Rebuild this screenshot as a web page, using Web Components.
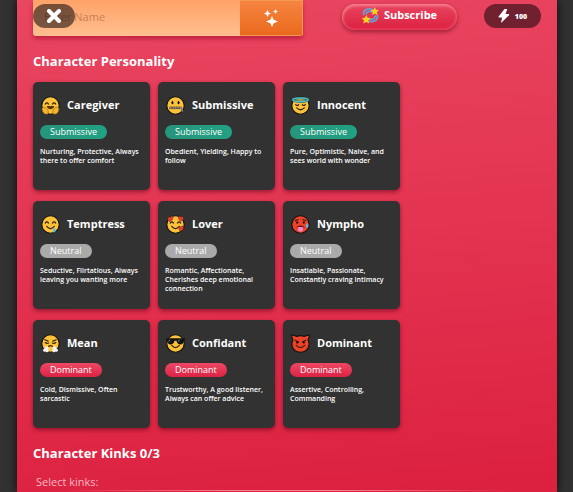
<!DOCTYPE html>
<html lang="en">
<head>
<meta charset="utf-8">
<meta name="viewport" content="width=device-width, initial-scale=1">
<title>Create Character</title>
<style>
    html{
        background-color: #323232;
    }
    body{
        margin: 0;
        min-height: 100vh;
        font-family: "Open Sans", "Noto Sans", sans-serif;
        color: white;
    }
</style>
</head>
<body>
<character-page>
    <name-field slot="name"></name-field>
    <top-bar slot="bar" credits="100"></top-bar>
    <page-section heading="Character Personality">
        <personality-grid></personality-grid>
    </page-section>
    <page-section heading="Character Kinks 0/3">
        <kink-list label="Select kinks:"></kink-list>
    </page-section>
</character-page>

<script>
// Small helper so each element only has to bring its markup
function attach(el, html){
    const template = document.createElement("template");
    template.innerHTML = html;
    el.attachShadow({mode:"open"});
    el.shadowRoot.appendChild(template.content.cloneNode(true));
}

class CharacterPage extends HTMLElement{
    constructor(){
        super();
        attach(this, `
            <style>
                :host{
                    display: block;
                    position: relative;
                    box-sizing: border-box;
                    min-height: 100vh;
                    margin: 0 16px 0 17px;
                    padding: 0 16px;
                    background: linear-gradient(175deg, #e94661, #dc203f);
                    box-shadow: 0 0 10px rgba(0, 0, 0, .8);
                }
            </style>
            <slot name="bar"></slot>
            <main>
                <slot name="name"></slot>
                <slot></slot>
            </main>
        `);
    }
}

class TopBar extends HTMLElement{
    constructor(){
        super();
        attach(this, `
            <style>
                :host{
                    position: absolute;
                    top: 4px;
                    left: 16px;
                    right: 16px;
                    z-index: 2;
                    display: flex;
                    align-items: flex-start;
                    gap: 27px;
                }
                button{
                    border: 0;
                    margin: 0;
                    font: inherit;
                    color: white;
                    cursor: pointer;
                }
                .close{
                    width: 42px;
                    height: 24px;
                    padding: 0;
                    margin-right: auto;
                    border-radius: 12px;
                    background-color: rgba(30, 20, 20, .6);
                }
                .close svg{
                    display: block;
                    margin: auto;
                }
                .subscribe{
                    display: flex;
                    justify-content: center;
                    gap: 5px;
                    width: 115px;
                    height: 26px;
                    padding: 3px 0;
                    border-radius: 13px;
                    font-size: 11px;
                    font-weight: 700;
                    line-height: 16px;
                    background: linear-gradient(#e94560, #dc2040);
                    box-shadow: 0 2px 4px rgba(110, 10, 30, .6), inset 1px 2px 3px rgba(255, 170, 175, .6), inset -1px -1px 3px rgba(255, 110, 130, .5);
                }
                .credits{
                    display: flex;
                    align-items: center;
                    justify-content: center;
                    gap: 5px;
                    width: 57px;
                    height: 24px;
                    border-radius: 12px;
                    font-size: 7px;
                    font-weight: 800;
                    background-color: #70202f;
                }
            </style>
            <button class="close" type="button" aria-label="Close">
                <svg width="16" height="16" viewBox="0 0 16 16"><path d="M3 3l10 10M13 3L3 13" stroke="#fff" stroke-width="4" stroke-linecap="round"/></svg>
            </button>
            <button class="subscribe" type="button">
                <svg width="17" height="17" viewBox="0 0 16 16">
                    <g fill="none" stroke="#65a5d9" stroke-width="1.6" stroke-linecap="round">
                        <path d="M1.500 7C1 3 5 1 9.500 2.200M4 6.500C4.500 4 7 3.500 9 4.500"/>
                        <path d="M14.500 8C15 12 12 14.500 7.500 13.500M12.500 8.500C12 11.500 9.500 12 7.500 11.500"/>
                    </g>
                    <path fill="#ffd21f" d="M12 0l1.200 2.600 2.800.2-2 2 .6 2.900L12 6.200 9.500 7.700 10 4.800 8 2.800l2.800-.2zM4 7.500l1.300 2.600 3 .3-2.100 2.100.5 3L4 14.100 1.300 15.500l.5-3L-.2 10.400l2.900-.3z"/>
                </svg>
                <span>Subscribe</span>
            </button>
            <div class="credits">
                <svg width="12" height="14" viewBox="0 0 12 14"><path d="M6.500 0L.6 7.600c-.3.500 0 1 .5 1h3L3 14 11 6.200c.5-.5.200-1.200-.4-1.200H7.500L9.300 0z" fill="#fff"/></svg>
                <span id="amount"></span>
            </div>
        `);
    }

    connectedCallback(){
        this.shadowRoot.getElementById("amount").textContent = this.getAttribute("credits");
    }
}

class NameField extends HTMLElement{
    constructor(){
        super();
        attach(this, `
            <style>
                :host{
                    display: flex;
                    width: 270px;
                    max-width: 100%;
                    height: 36px;
                    border-radius: 0 0 3px 3px;
                    overflow: hidden;
                    box-shadow: 0 3px 4px rgba(165, 15, 45, .6);
                }
                input{
                    flex: 1;
                    min-width: 0;
                    box-sizing: border-box;
                    border: 0;
                    padding: 0 11px 4px;
                    font: inherit;
                    font-size: 11px;
                    background: linear-gradient(#ffa268, #ffbf8f);
                }
                input::placeholder{
                    color: #cc7f58;
                    opacity: 1;
                }
                button{
                    width: 63px;
                    padding: 0;
                    border: 1px solid #f39a50;
                    border-left: 0;
                    background: linear-gradient(#f68440, #ea6a1c);
                    cursor: pointer;
                }
                svg{
                    display: block;
                    margin: auto;
                }
            </style>
            <input type="text" placeholder="Enter Name" aria-label="Enter Name">
            <button type="button" aria-label="Random name">
                <svg width="18" height="18" viewBox="0 0 18 18" fill="#fff">
                    <path d="M10 7l1.700 3.800L16 12.500l-4.300 1.700L10 18l-1.700-3.800L4 12.500l4.300-1.700zM5.500 1l1.200 2.400L9 4.500 6.700 5.600 5.500 8 4.300 5.600 2 4.500l2.300-1.100zM13.500 0l.8 1.700 1.700.8-1.700.8-.8 1.700-.8-1.700-1.700-.8 1.700-.8z"/>
                </svg>
            </button>
        `);
    }
}

class PageSection extends HTMLElement{
    constructor(){
        super();
        attach(this, `
            <style>
                :host{
                    display: block;
                    padding-top: 15px;
                }
                h2{
                    margin: 0 0 11px;
                    font-size: 13px;
                    font-weight: 700;
                    line-height: 20px;
                }
            </style>
            <h2></h2>
            <slot></slot>
        `);
    }

    connectedCallback(){
        this.shadowRoot.querySelector("h2").textContent = this.getAttribute("heading");
    }
}

const round = `<circle cx="10" cy="10" r="9.200"/>`;
const smile = `<path class="line" d="M6 12q4 4.500 8 0"/>`;
const happyEyes = `<path class="line" d="M4.500 8.500q1.700-2.500 3.400 0M12.100 8.500q1.700-2.500 3.400 0"/>`;

// Drawn on a 20x20 box, the face outline comes from the shared styles
const faces = {
    hug: `<g class="face">${round}</g>${happyEyes}<path d="M6 10.500h8q-1 3.500-4 3.500t-4-3.500z" fill="#5d3512"/>
        <path d="M1 13l3-1.500 3.500 3.500v4H4q-3-2-3-6zM19 13l-3-1.500-3.500 3.500v4H16q3-2 3-6z" fill="#f5b52e" stroke="#8a5a12" stroke-width=".6"/>`,
    zipper: `<g class="face">${round}</g><ellipse cx="6.800" cy="7" rx="1" ry="1.700"/><ellipse cx="13.200" cy="7" rx="1" ry="1.700"/>
        <path d="M3.500 12.500h13" stroke="#5a4a30" stroke-width="2.600"/><path d="M4 12.500h12" stroke="#b9b3a2" stroke-width="1.200" stroke-dasharray="1 .8"/><path d="M16 12.500l1.500 4" stroke="#777" stroke-width="1.600"/>`,
    halo: `<g class="face">${round}</g><path class="line" d="M5 9q1.500 2 3 0M12 9q1.500 2 3 0M6 12.500q4 4 8 0"/>
        <ellipse cx="10" cy="4" rx="8" ry="2" fill="none" stroke="#1f5961" stroke-width="2.600"/><ellipse cx="10" cy="4" rx="8" ry="2" fill="none" stroke="#55bdc4" stroke-width="1.600"/>`,
    drool: `<g class="face">${round}</g>${happyEyes}${smile}<path d="M13.500 12.500q2.500 3.500 1.500 5.500-1.500 1-2.500-.5z" fill="#52b9e8"/>`,
    love: `<g class="face">${round}</g>${happyEyes}${smile}
        <g fill="#e8402e" stroke="#6b1b12" stroke-width=".5"><path d="M2 4q0-3 2.500-1.500Q7-.5 7.500 3 7 5.500 4 7 1.500 6 2 4zM13 3q1-2.500 2.500-1Q18 1 18.500 3.500 18 6 15.500 6.500 13 5 13 3zM13.500 14q0-2.500 2-1.500 2.500-2 3 .5 0 3-3 4-2-1-2-3z"/></g>`,
    hot: `<g class="face red">${round}</g><path class="line" d="M4.500 6l3-1M12.500 5l3 1"/><circle cx="6.500" cy="8" r="1.100"/><circle cx="13.500" cy="8" r="1.100"/>
        <path d="M5.500 13q4.500-4 9 0z" fill="#521515"/><path d="M7.500 12.500h5V16q-2.500 3.500-5 0z" fill="#e98bd0"/><path d="M17 8.500q3 4 0 5-3-1 0-5z" fill="#51bce9"/>`,
    huff: `<g class="face">${round}</g><path class="line" d="M4 6l3.500 1.500M16 6l-3.500 1.500M4.500 9q1.500 1.500 3.500.5M15.500 9q-1.500 1.500-3.500.5M8 13q2-1.500 4 0"/>
        <g fill="#f4f4f4"><circle cx="6" cy="15" r="2"/><circle cx="4" cy="17" r="1.800"/><circle cx="6.500" cy="17.500" r="1.600"/><circle cx="14" cy="15" r="2"/><circle cx="16" cy="17" r="1.800"/><circle cx="13.500" cy="17.500" r="1.600"/></g>`,
    cool: `<g class="face">${round}</g>${smile}<path d="M0 4.500h20v2l-1.500.5q0 4-3.500 4-3 0-4-4H9q-1 4-4 4-3.500 0-3.500-4L0 6.500z" fill="#141414"/><path d="M4 6l-1 2M14 6l-1 2" stroke="#aaa" stroke-width=".8"/>`,
    devil: `<g class="face red"><path d="M.5 1q3 .3 5.500 1.500 4-1.600 8 0Q16.500 1.300 19.500 1q-.3 3-1.500 5 1.500 3.500 1 6-1.500 7.200-9 7.200T1 12q-.5-2.500 1-6Q.7 4 .5 1z"/></g>
        <path class="line" d="M4.500 6.500l3.500 2M15.500 6.500l-3.500 2M5.500 12q4.500 4.500 9 0"/><circle cx="6.500" cy="9" r="1.100"/><circle cx="13.500" cy="9" r="1.100"/>`
};

class PersonalityCard extends HTMLElement{
    constructor(){
        super();
        attach(this, `
            <style>
                :host{
                    display: flex;
                }
                button{
                    display: flex;
                    flex-direction: column;
                    align-items: flex-start;
                    width: 100%;
                    min-height: 108px;
                    padding: 13px 7px 8px;
                    border: 0;
                    border-radius: 5px;
                    font: inherit;
                    color: white;
                    text-align: left;
                    background-color: #323232;
                    box-shadow: 0 2px 4px rgba(120, 10, 35, .7);
                    cursor: pointer;
                }
                .head{
                    display: flex;
                    align-items: center;
                    gap: 7px;
                    padding-left: 1px;
                    height: 20px;
                }
                svg{
                    width: 19px;
                    height: 19px;
                    overflow: visible;
                }
                .face{
                    fill: #fbc23a;
                    stroke: #111;
                    stroke-width: 1.200;
                }
                .red{
                    fill: #ee4328;
                }
                .line{
                    fill: none;
                    stroke: #33220f;
                    stroke-width: 1.300;
                    stroke-linecap: round;
                }
                #name{
                    font-size: 11px;
                    font-weight: 700;
                    line-height: 16px;
                }
                #type{
                    margin: 10px 0 8px;
                    padding: 0 10px;
                    border-radius: 7px;
                    font-size: 9px;
                    line-height: 14px;
                }
                .Submissive{
                    background: linear-gradient(90deg, #26957b, #22a184);
                }
                .Neutral{
                    background-color: #aaa;
                }
                .Dominant{
                    background: linear-gradient(#ed4865, #dc2344);
                }
                #traits{
                    font-size: 7px;
                    font-weight: 600;
                    line-height: 9px;
                }
            </style>
            <button type="button">
                <span class="head">
                    <svg viewBox="0 0 20 20" aria-hidden="true"></svg>
                    <span id="name"></span>
                </span>
                <span id="type"></span>
                <span id="traits"></span>
            </button>
        `);
    }

    connectedCallback(){
        const type = this.shadowRoot.getElementById("type");
        type.textContent = this.getAttribute("type");
        type.className = this.getAttribute("type");
        this.shadowRoot.querySelector("svg").innerHTML = faces[this.getAttribute("face")];
        this.shadowRoot.getElementById("name").textContent = this.getAttribute("name");
        this.shadowRoot.getElementById("traits").textContent = this.getAttribute("traits");
    }
}

const personalities = [
    ["hug", "Caregiver", "Submissive", "Nurturing, Protective, Always there to offer comfort"],
    ["zipper", "Submissive", "Submissive", "Obedient, Yielding, Happy to follow"],
    ["halo", "Innocent", "Submissive", "Pure, Optimistic, Naive, and sees world with wonder"],
    ["drool", "Temptress", "Neutral", "Seductive, Flirtatious, Always leaving you wanting more"],
    ["love", "Lover", "Neutral", "Romantic, Affectionate, Cherishes deep emotional connection"],
    ["hot", "Nympho", "Neutral", "Insatiable, Passionate, Constantly craving intimacy"],
    ["huff", "Mean", "Dominant", "Cold, Dismissive, Often sarcastic"],
    ["cool", "Confidant", "Dominant", "Trustworthy, A good listener, Always can offer advice"],
    ["devil", "Dominant", "Dominant", "Assertive, Controlling, Commanding"]
];

class PersonalityGrid extends HTMLElement{
    constructor(){
        super();
        attach(this, `
            <style>
                :host{
                    display: grid;
                    grid-template-columns: repeat(3, 117px);
                    gap: 11px 8px;
                }
            </style>
        `);
    }

    connectedCallback(){
        for (const [face, name, type, traits] of personalities) {
            const card = document.createElement("personality-card");
            card.setAttribute("face", face);
            card.setAttribute("name", name);
            card.setAttribute("type", type);
            card.setAttribute("traits", traits);
            this.shadowRoot.appendChild(card);
        }
    }
}

class KinkList extends HTMLElement{
    constructor(){
        super();
        attach(this, `
            <style>
                :host{
                    display: block;
                }
                p{
                    margin: 0;
                    padding: 0 3px;
                    font-size: 11px;
                    line-height: 16px;
                    color: #f8b9c2;
                }
                hr{
                    height: 1px;
                    margin: 0;
                    border: 0;
                    background: linear-gradient(90deg, transparent 6%, #f58295 40%, #f58295 60%, transparent 94%);
                }
            </style>
            <p></p>
            <hr>
        `);
    }

    connectedCallback(){
        this.shadowRoot.querySelector("p").textContent = this.getAttribute("label");
    }
}

customElements.define("character-page", CharacterPage);
customElements.define("top-bar", TopBar);
customElements.define("name-field", NameField);
customElements.define("page-section", PageSection);
customElements.define("personality-card", PersonalityCard);
customElements.define("personality-grid", PersonalityGrid);
customElements.define("kink-list", KinkList);
</script>
</body>
</html>
